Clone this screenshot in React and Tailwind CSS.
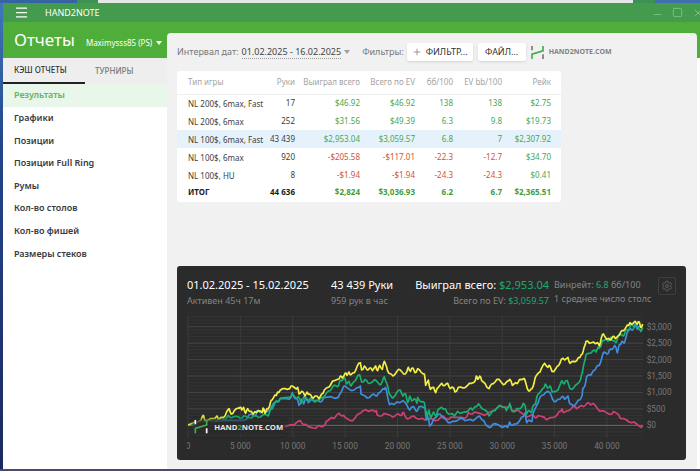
import { Menu, Minus, Plus, Settings, Square, X } from "lucide-react";

const menu = [
  "Результаты",
  "Графики",
  "Позиции",
  "Позиции Full Ring",
  "Румы",
  "Кол-во столов",
  "Кол-во фишей",
  "Размеры стеков",
];

const columns = ["Тип игры", "Руки", "Выиграл всего", "Всего по EV", "бб/100", "EV bb/100", "Рейк"];

const rows = [
  ["NL 200$, 6max, Fast", "17", "$46.92", "$46.92", "138", "138", "$2.75"],
  ["NL 200$, 6max", "252", "$31.56", "$49.39", "6.3", "9.8", "$19.73"],
  ["NL 100$, 6max, Fast", "43 439", "$2,953.04", "$3,059.57", "6.8", "7", "$2,307.92"],
  ["NL 100$, 6max", "920", "-$205.58", "-$117.01", "-22.3", "-12.7", "$34.70"],
  ["NL 100$, HU", "8", "-$1.94", "-$1.94", "-24.3", "-24.3", "$0.41"],
];

const total = ["ИТОГ", "44 636", "$2,824", "$3,036.93", "6.2", "6.7", "$2,365.51"];

// Every line is kept as three stretches, each with its own x origin
const origins = [0, 510, 1035];

const series = [
  {
    color: "#cf3f78",
    parts: [
      "40,345 100,352 160,348 220,352 280,346 330,350 350,344 362,340 376,332 386,344 400,350 416,354 428,348 440,350 450,344 458,332 470,322 480,322 492,310 502,318",
      "0,322 16,332 30,324 40,312 54,302 70,304 84,300 94,302 96,314 110,318 124,312 136,316 150,318 160,312 170,316 176,308 182,322 194,324 206,318 222,328 240,330 260,326 280,330 294,318 310,328 328,322 350,322 366,320 370,308 382,312 396,308 410,312 426,312 440,304 456,294 470,290 484,292 494,286 500,300 514,302",
      "0,306 14,316 28,318 40,316 48,324 60,318 74,322 82,328 100,322 112,314 122,304 126,296 132,308 146,302 158,290 170,296 184,286 196,286 206,278 214,284 224,284 234,298 246,302 262,310 276,312 284,306 296,314 304,326 320,330 334,338 350,342 360,350 368,346",
    ],
  },
  {
    color: "#3f8ee0",
    parts: [
      "40,345 80,342 130,334 200,332 216,326 228,312 240,318 246,302 256,308 264,298 274,306 282,300 290,290 300,276 312,272 320,266 336,266 348,262 352,248 360,266 368,270 372,286 380,268 386,282 392,262 400,278 410,268 424,272 436,276 444,268 452,262 468,260 490,262 496,250 502,238",
      "0,228 10,236 28,240 40,232 46,228 48,252 60,258 74,262 86,252 96,258 104,248 114,236 122,232 128,262 134,284 146,284 156,276 174,272 186,286 194,300 206,290 214,304 222,290 240,294 244,330 250,322 254,348 264,332 272,322 280,312 292,322 304,330 316,338 330,334 344,326 360,332 376,328 390,328 404,318 412,330 422,344 432,352 444,342 460,344 474,352 488,352 494,336 502,346 514,342",
      "0,330 10,320 16,308 20,338 28,330 36,334 40,308 50,286 58,266 66,256 76,248 90,248 98,268 108,274 116,268 126,260 134,268 144,258 150,282 160,288 170,278 180,270 186,258 188,238 194,230 200,200 212,196 220,182 230,170 238,166 246,142 252,126 262,132 268,120 276,118 284,106 292,128 298,104 306,94 312,100 318,82 324,64 332,56 340,58 346,42 352,58 360,50 368,56",
    ],
  },
  {
    color: "#18b070",
    parts: [
      "40,345 70,338 90,330 110,334 130,328 150,330 160,316 172,322 190,320 200,326 210,318 224,324 236,316 250,322 262,316 280,318 286,298 296,288 304,272 312,274 320,264 340,262 352,254 362,264 370,260 378,280 388,258 400,272 412,262 420,276 430,272 440,262 450,256 460,244 470,236 480,226 488,230 494,214 500,212 508,202",
      "4,222 12,214 18,228 28,214 34,206 44,194 50,216 60,208 70,220 84,214 94,212 104,224 112,214 118,200 126,222 132,250 142,264 156,246 166,240 174,258 182,252 188,278 194,258 200,272 208,266 216,280 218,262 230,276 238,278 242,300 246,322 252,300 258,324 266,306 274,320 280,298 290,292 300,296 306,308 316,312 328,318 338,304 352,308 364,306 374,296 382,300 390,290 400,282 408,292 420,300 432,318 444,302 456,294 466,286 478,292 484,302 490,290 494,280 500,302 510,304 520,296",
      "0,296 10,280 16,290 20,312 28,302 34,308 38,290 46,282 50,262 58,250 68,236 76,222 82,234 90,228 96,246 108,244 118,230 126,212 132,222 142,212 150,236 162,232 172,222 182,208 186,192 192,160 198,134 210,130 218,122 228,126 234,112 242,110 248,92 256,88 264,94 272,82 280,92 288,98 294,80 302,72 310,78 316,62 326,60 332,44 342,52 350,42 358,58 362,64 368,54",
    ],
  },
  {
    color: "#f4ef45",
    parts: [
      "40,345 60,336 78,330 85,316 92,335 120,325 126,318 134,326 142,322 150,318 162,296 168,312 178,302 190,294 195,292 200,300 206,292 212,310 218,296 224,304 234,312 240,305 250,302 262,308 264,294 270,310 276,296 284,288 288,272 296,262 304,256 308,246 316,240 330,236 344,236 352,228 360,234 368,232 372,252 380,244 390,258 396,246 404,252 412,264 420,258 432,266 440,252 448,240 460,232 468,222 478,212 488,208 496,198 502,204",
      "0,190 6,196 12,186 18,194 28,188 36,170 46,158 50,180 58,168 66,180 74,174 82,182 92,168 98,182 104,166 112,178 118,154 124,168 132,190 144,198 156,184 166,180 176,192 186,184 190,172 196,184 204,174 210,188 218,176 228,186 238,192 242,226 250,210 256,238 266,232 272,248 280,232 290,220 300,226 308,220 316,236 326,234 330,246 340,232 354,234 366,228 380,220 388,216 394,198 398,208 404,198 410,212 420,220 432,236 440,222 450,216 462,208 470,218 480,222 490,212 494,208 502,226 512,218 520,216",
      "0,208 10,206 16,214 22,236 30,242 36,236 42,220 48,198 56,188 64,176 74,160 84,172 90,168 96,184 106,178 116,166 124,148 134,150 144,142 150,160 160,154 170,152 180,142 184,134 190,122 194,108 198,94 208,100 220,96 232,98 238,108 244,84 250,72 256,82 264,86 270,90 278,80 286,86 294,78 302,66 310,62 318,52 326,46 330,38 340,40 346,34 352,42 358,36 362,52 368,42",
    ],
  },
];

function toPath(parts) {
  const points = parts.flatMap((part, i) =>
    part.split(" ").map((pair) => {
      const [x, y] = pair.split(",").map(Number);
      return [x + origins[i], y];
    })
  );
  let d = `M${points[0][0]} ${points[0][1]}`;
  for (let i = 1; i < points.length; i++) {
    const [x0, y0] = points[i - 1];
    const [x, y] = points[i];
    const kick = ((i * 7) % 5) - 2;
    d += ` L${(x0 + x) / 2} ${(y0 + y) / 2 + kick * 2} L${x} ${y}`;
  }
  return d;
}

function Mark({ light }) {
  return (
    <g fill="none" strokeWidth="5">
      <path d="M3 0V13M37 25V40" stroke={light ? "#ffffff" : "#77787b"} />
      <path d="M3 40V25L37 15V0" stroke="#3fae49" />
    </g>
  );
}

function Chart() {
  const minor = Array.from({ length: 38 }, (_, i) => 375.6 - i * 9.87);
  const money = ["$0", "$500", "$1,000", "$1,500", "$2,000", "$2,500", "$3,000"];
  const hands = ["0", "5 000", "10 000", "15 000", "20 000", "25 000", "30 000", "35 000", "40 000"];

  return (
    <svg viewBox="36 15 1467 429" className="block w-full" role="img" aria-label="Hand2Note">
      <defs>
        <filter id="soft" x="-20%" y="-50%" width="140%" height="200%">
          <feGaussianBlur stdDeviation="8" />
        </filter>
      </defs>
      {minor.map((y) => (
        <path key={y} d={`M38 ${y}H1404`} stroke="#353535" strokeWidth="2.5" />
      ))}
      {hands.map((label, i) => (
        <path key={label} d={`M${39 + i * 157.1} 17V384`} stroke="#3b3b3b" strokeWidth="3" />
      ))}
      {money.map((label, i) => (
        <path key={label} d={`M38 ${346 - i * 49.3}H1404`} stroke={i === 0 ? "#6a6a6a" : "#434343"} strokeWidth="3" />
      ))}
      {series.map((line) => (
        <path key={line.color} d={toPath(line.parts)} fill="none" stroke={line.color} strokeWidth="5" strokeLinejoin="round" />
      ))}
      <rect x="56" y="332" width="270" height="40" rx="6" fill="#2b2b2b" filter="url(#soft)" />
      <rect x="56" y="336" width="270" height="34" rx="6" fill="#2b2b2b" filter="url(#soft)" />
      <g transform="translate(58 330)">
        <Mark light />
      </g>
      <text x="118" y="360" fontSize="23" fontWeight="700" fill="#e8e8e8" className="[font-family:'Open_Sans',sans-serif]">
        HAND<tspan fill="#3fae49">2</tspan>NOTE.COM
      </text>
      <g fill="#777777" fontSize="25" className="[font-family:Roboto,sans-serif]">
        {hands.map((label, i) => (
          <text key={label} x={39 + i * 157.1} y="416" textAnchor="middle">{label}</text>
        ))}
        {money.map((label, i) => (
          <text key={label} x="1415" y={355 - i * 49.3}>{label}</text>
        ))}
      </g>
    </svg>
  );
}

function tone(value) {
  return value.startsWith("-") ? "text-[#d0532f]" : "text-[#4aa84a]";
}

function ResultsTable() {
  return (
    <table className="w-[384px] table-fixed overflow-hidden rounded-[3px] bg-white text-right text-[8px] leading-[12px]">
      <colgroup>
        <col className="w-[81px]" />
        <col className="w-[37px]" />
        <col className="w-[65px]" />
        <col className="w-[55px]" />
        <col className="w-[38px]" />
        <col className="w-[49px]" />
        <col className="w-[59px]" />
      </colgroup>
      <thead>
        <tr className="h-[23px] border-b border-[#efefef] whitespace-nowrap text-[#a3a3a3]">
          {columns.map((name) => (
            <th key={name} scope="col" className="p-0 font-normal first:pl-[11px] first:text-left last:pr-[10px]">{name}</th>
          ))}
        </tr>
      </thead>
      <tbody>
        {rows.map((row, i) => (
          <tr key={row[0]} className={`h-[18px] whitespace-nowrap text-[#3d3d3d] ${i === 2 ? "bg-[#e5f2fc]" : ""}`}>
            {row.map((cell, j) => (
              <td key={j} className={`p-0 first:pt-[2px] first:pl-[11px] first:text-left last:pr-[10px] ${j > 1 ? tone(cell) : ""}`}>{cell}</td>
            ))}
          </tr>
        ))}
      </tbody>
      <tfoot>
        <tr className="h-[18px] whitespace-nowrap font-bold text-[#1c1c1c]">
          {total.map((cell, j) => (
            <td key={j} className={`p-0 pb-[2px] first:pl-[11px] first:text-left last:pr-[10px] ${j > 1 ? "text-[#3f9e3f]" : ""}`}>{cell}</td>
          ))}
        </tr>
      </tfoot>
    </table>
  );
}

function Sidebar() {
  return (
    <aside className="flex w-[164px] shrink-0 flex-col bg-white">
      <div className="flex h-[36px] items-center gap-[11px] bg-[#4fae3a] pl-[11px] text-white">
        <h1 className="text-[17px] leading-[24px]">Отчеты</h1>
        <button className="flex items-center gap-1 pt-[5px] text-[8px] leading-[12px] whitespace-nowrap">
          Maximysss85 (PS)
          <svg viewBox="0 0 6 4" className="w-[6px] fill-white"><path d="M0 0H6L3 4Z" /></svg>
        </button>
      </div>
      <div className="flex h-[26px] bg-[#eeeeee] text-[8px] leading-[12px] font-medium">
        <button className="w-[82px] border-b-2 border-[#222222] pl-[11px] text-left text-[#333333]">КЭШ ОТЧЕТЫ</button>
        <button className="pl-[10px] text-[#7a7a7a]">ТУРНИРЫ</button>
      </div>
      <nav className="grid h-[181px] grid-rows-8 text-[9px] leading-[12px] font-semibold text-[#3a3a3a]">
        {menu.map((item, i) => (
          <a key={item} href="#" className={`flex items-center pl-[11px] ${i === 0 ? "bg-[#e9f6ea] text-[#62b562]" : ""}`}>{item}</a>
        ))}
      </nav>
    </aside>
  );
}

function Toolbar() {
  return (
    <div className="flex h-[38px] items-center text-[9px] leading-[12px] whitespace-nowrap text-[#777777]">
      <span>Интервал дат:</span>
      <button className="ml-[3px] flex items-center gap-[3px] text-[#444444]">
        <span className="border-b border-dotted border-[#999999]">01.02.2025 - 16.02.2025</span>
        <svg viewBox="0 0 6 4" className="w-[6px] fill-[#a0a0a0]"><path d="M0 0H6L3 4Z" /></svg>
      </button>
      <span className="ml-[12px]">Фильтры:</span>
      <button className="ml-[3px] flex h-[18px] w-[66px] items-center justify-center gap-1 rounded-xs bg-white text-[#333333] shadow">
        <Plus size={10} strokeWidth={2} className="text-[#888888]" />
        ФИЛЬТР...
      </button>
      <button className="ml-[5px] h-[18px] w-[48px] rounded-xs bg-white text-[#333333] shadow">ФАЙЛ...</button>
      <svg viewBox="0 0 40 40" className="ml-[5px] w-[13px]"><Mark /></svg>
      <span className="ml-[5px] text-[7px] font-bold text-[#808184] [font-family:'Open_Sans',sans-serif]">
        HAND<span className="text-[#3fae49]">2</span>NOTE.COM
      </span>
    </div>
  );
}

function ChartCard() {
  return (
    <section className="mt-auto mr-[11px] mb-[9px] rounded-[3px] bg-[#2b2b2b] px-[10px] pb-[2px] text-[#858585]">
      <div className="flex h-[49px] items-start pt-[11px] text-[9px] leading-[16px] whitespace-nowrap">
        <div className="w-[144px]">
          <p className="text-[11px] text-white">01.02.2025 - 15.02.2025</p>
          <p>Активен 45ч 17м</p>
        </div>
        <div className="w-[84px]">
          <p className="text-[11px] text-white">43 439 Руки</p>
          <p>959 рук в час</p>
        </div>
        <div className="w-[134px] text-right">
          <p className="text-[11px] text-white">
            Выиграл всего: <span className="text-[#1fa971]">$2,953.04</span>
          </p>
          <p>
            Всего по EV: <span className="text-[#1fa971]">$3,059.57</span>
          </p>
        </div>
        <div className="ml-[5px]">
          <p>
            Винрейт: <span className="text-[#1fa971]">6.8</span> бб/100
          </p>
          <p className="leading-[12px]">1 среднее число столс</p>
        </div>
        <button aria-label="Настройки" className="ml-auto flex size-[18px] items-center justify-center rounded-xs border border-[#3f3f3f] text-[#5e5e5e]">
          <Settings size={12} strokeWidth={2} />
        </button>
      </div>
      <Chart />
    </section>
  );
}

export default function App() {
  return (
    <div className="flex min-h-screen flex-col border-b-2 border-[#4a4a6a] bg-white [font-family:'Noto_Sans','Open_Sans',sans-serif]">
      <div className="flex h-[3px] bg-[#e6e6e6]">
        <div className="w-[77px] bg-[#3564a5]" />
        <div className="w-[21px] bg-[#3d9152]" />
        <div className="ml-auto w-[22px] bg-[#3d9152]" />
        <div className="w-[45px] bg-[#3f6fae]" />
      </div>
      <div className="flex flex-1">
        <div className="w-[3px] shrink-0 bg-linear-to-b from-[#3f78b8] via-[#24468c] via-30% to-[#1c2860]" />
        <div className="flex min-w-0 flex-1 flex-col">
          <header className="flex h-[19px] items-center overflow-hidden bg-[#459b4d] pl-[11px] text-white">
            <button aria-label="Меню"><Menu size={15} strokeWidth={2} /></button>
            <span className="ml-4 text-[9px] leading-[12px]">HAND2NOTE</span>
            <div className="ml-auto flex items-center gap-[9px] text-[#7fbf83]">
              <button aria-label="Свернуть"><Minus size={11} strokeWidth={2} className="mt-1" /></button>
              <button aria-label="Развернуть"><Square size={11} strokeWidth={2} /></button>
              <button aria-label="Закрыть" className="-mr-1"><X size={12} strokeWidth={2} /></button>
            </div>
          </header>
          <div className="flex flex-1 bg-[linear-gradient(#4fae3a_36px,#ffffff_36px)]">
            <Sidebar />
            <div className="flex min-w-0 flex-1 pt-[11px] pr-[3px]">
              <main className="flex min-w-0 flex-1 flex-col rounded-t-[4px] bg-[#f1f1f1] pl-[10px]">
                <Toolbar />
                <ResultsTable />
                <ChartCard />
              </main>
            </div>
          </div>
        </div>
      </div>
    </div>
  );
}
